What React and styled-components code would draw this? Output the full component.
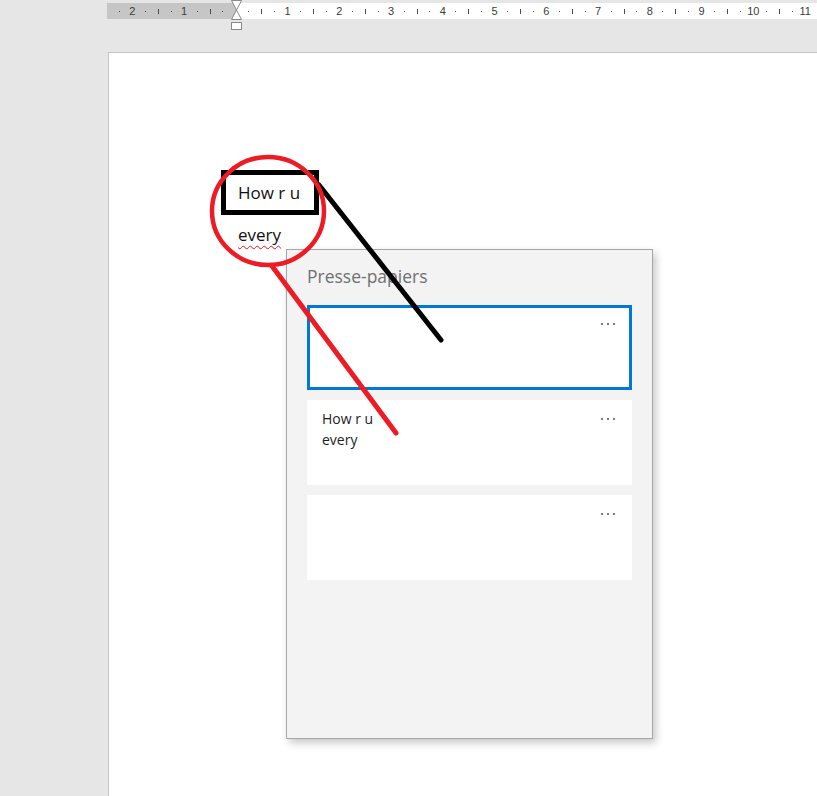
import React from "react";
import styled, { createGlobalStyle } from "styled-components";

const Global = createGlobalStyle`
  html, body { margin: 0; padding: 0; background: #e6e6e6; }
  body { font-family: "Open Sans", "Noto Sans", sans-serif; }
`;

const Root = styled.div`
  position: relative;
  width: 817px;
  height: 796px;
  overflow: hidden;
  background: #e6e6e6;
  display: flex;
  flex-direction: column;
`;

const RULER_ORIGIN = 129; // px from ruler left (x=107) to indent (x=236)
const Q = 12.95; // quarter centimetre

const Ruler = styled.div`
  position: relative;
  margin: 3px 0 0 107px;
  height: 16px;
  flex: none;
  display: flex;
  align-items: center;
  padding-left: ${RULER_ORIGIN - 9.5 * Q}px;
  background: linear-gradient(to right, #c6c6c6 0, #c6c6c6 ${RULER_ORIGIN}px, #ffffff ${RULER_ORIGIN}px);
`;

const Cell = styled.div`
  flex: none;
  width: ${Q}px;
  height: 16px;
  display: flex;
  align-items: center;
  justify-content: center;
  font-family: "Liberation Sans", "DejaVu Sans", sans-serif;
  font-size: 11px;
  color: #3c3c3c;
`;

const Dot = styled.span`
  width: 1px;
  height: 1px;
  background: #4a4a4a;
`;

const Tick = styled.span`
  width: 1px;
  height: 5px;
  background: #4a4a4a;
`;

const IndentMarker = styled.svg`
  position: absolute;
  left: ${231 - 107}px;
  top: -3px;
  overflow: visible;
`;

const Page = styled.div`
  flex: 1;
  margin: 33px 0 0 108px;
  background: #ffffff;
  border-top: 1px solid #c6c6c6;
  border-left: 1px solid #c6c6c6;
  padding: 117px 0 0 112px;
  display: flex;
  flex-direction: column;
  align-items: flex-start;
`;

const TextBox = styled.div`
  box-sizing: border-box;
  width: 98px;
  height: 45px;
  border: 5px solid #000;
  display: flex;
  align-items: center;
  padding-left: 12px;
  font-family: "Open Sans", "Noto Sans", sans-serif;
  font-size: 17px;
  color: #111;
`;

const DocLine = styled.div`
  margin: 9px 0 0 17px;
  font-family: "Open Sans", "Noto Sans", sans-serif;
  font-size: 17px;
  line-height: 22px;
  color: #111;
  text-decoration-line: underline;
  text-decoration-style: wavy;
  text-decoration-color: #e2161e;
  text-decoration-thickness: 1px;
  text-underline-offset: 4px;
`;

const Panel = styled.div`
  position: absolute;
  left: 286px;
  top: 249px;
  width: 367px;
  height: 490px;
  box-sizing: border-box;
  background: #f3f3f3;
  border: 1px solid #a6a6a6;
  box-shadow: 3px 4px 8px rgba(0, 0, 0, 0.22);
  padding: 14px 20px 0 20px;
  display: flex;
  flex-direction: column;
`;

const PanelTitle = styled.div`
  font-family: "Open Sans", "Noto Sans", sans-serif;
  font-size: 17.5px;
  line-height: 24px;
  color: #707070;
  margin-bottom: 17px;
`;

const CardList = styled.div`
  display: flex;
  flex-direction: column;
  gap: 10px;
`;

const Card = styled.div`
  box-sizing: border-box;
  width: 325px;
  height: 85px;
  background: #ffffff;
  border: 3px solid ${(p) => (p.$selected ? "#0078d7" : "#ffffff")};
  padding: 5px 14px 0 12px;
  display: flex;
  justify-content: space-between;
  align-items: flex-start;
`;

const CardText = styled.div`
  font-family: "Open Sans", "Noto Sans", sans-serif;
  font-size: 14px;
  line-height: 21px;
  color: #1e1e1e;
`;

const More = styled.div`
  margin-top: 10px;
  margin-left: auto;
  display: flex;
  gap: 4px;
`;

const MoreDot = styled.span`
  width: 2px;
  height: 2px;
  background: #7a7a7a;
`;

const Annotations = styled.svg`
  position: absolute;
  left: 0;
  top: 0;
  pointer-events: none;
`;

function RulerMark({ i }) {
  if (i === 0) return <Cell />;
  if (i % 4 === 0) return <Cell>{Math.abs(i / 4)}</Cell>;
  if (Math.abs(i % 4) === 2) return <Cell><Tick /></Cell>;
  return <Cell><Dot /></Cell>;
}

function Ellipsis() {
  return (
    <More>
      <MoreDot />
      <MoreDot />
      <MoreDot />
    </More>
  );
}

export default function App() {
  const marks = [];
  for (let i = -9; i <= 44; i++) marks.push(i);
  return (
    <Root>
      <Global />
      <Ruler>
        {marks.map((i) => (
          <RulerMark key={i} i={i} />
        ))}
        <IndentMarker width="11" height="31" viewBox="0 0 11 31">
          <path d="M0.5 0.5 H10.5 L5.5 10 Z" fill="#ffffff" stroke="#8a8a8a" />
          <path d="M5.5 10 L0.5 19.5 H10.5 Z" fill="#ffffff" stroke="#8a8a8a" />
          <rect x="0.5" y="22.5" width="10" height="7" fill="#ffffff" stroke="#8a8a8a" />
        </IndentMarker>
      </Ruler>
      <Page>
        <TextBox>How r u</TextBox>
        <DocLine>every</DocLine>
      </Page>
      <Panel>
        <PanelTitle>Presse-papiers</PanelTitle>
        <CardList>
          <Card $selected>
            <Ellipsis />
          </Card>
          <Card>
            <CardText>
              How r u
              <br />
              every
            </CardText>
            <Ellipsis />
          </Card>
          <Card>
            <Ellipsis />
          </Card>
        </CardList>
      </Panel>
      <Annotations width="817" height="796" viewBox="0 0 817 796">
        <line x1="319" y1="185" x2="441" y2="340" stroke="#000" strokeWidth="5" strokeLinecap="round" />
        <ellipse cx="268" cy="211" rx="56" ry="54" fill="none" stroke="#ed1c24" strokeWidth="4.5" />
        <line x1="272" y1="266" x2="396" y2="433" stroke="#ed1c24" strokeWidth="5" strokeLinecap="round" />
      </Annotations>
    </Root>
  );
}
